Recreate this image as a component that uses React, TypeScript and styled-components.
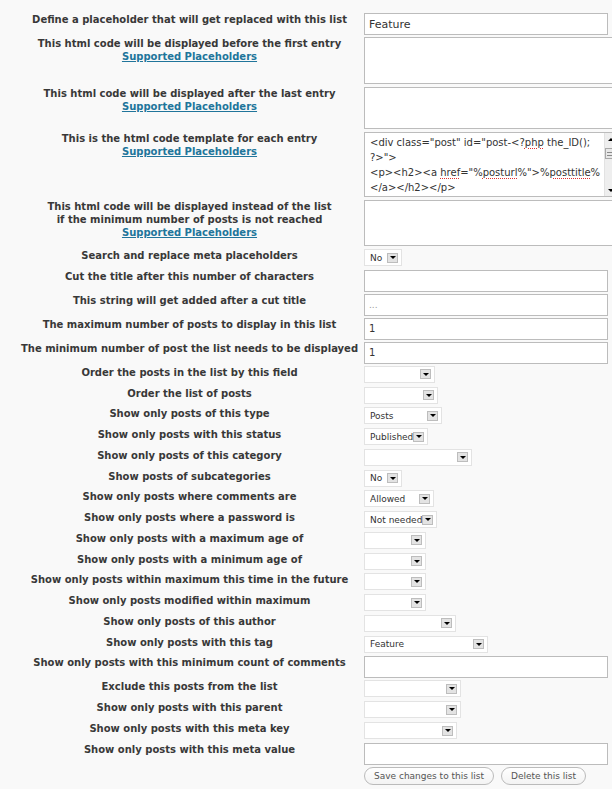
import React from 'react';
import styled, { createGlobalStyle } from 'styled-components';

const GlobalStyle = createGlobalStyle`
  html, body {
    margin: 0;
    padding: 0;
    background: #f9f9f9;
  }
  body {
    overflow: hidden;
    font-family: "DejaVu Sans", Verdana, sans-serif;
  }
`;

type Field =
  | { kind: 'input'; value?: string; size?: number; muted?: boolean }
  | { kind: 'textarea'; h: number }
  | { kind: 'code'; h: number }
  | { kind: 'select'; w: number; value?: string }
  | { kind: 'buttons' };

interface RowData {
  lines: string[];
  link?: boolean;
  field: Field;
}

const rows: RowData[] = [
  { lines: ['Define a placeholder that will get replaced with this list'], field: { kind: 'input', value: 'Feature', size: 11 } },
  { lines: ['This html code will be displayed before the first entry'], link: true, field: { kind: 'textarea', h: 47 } },
  { lines: ['This html code will be displayed after the last entry'], link: true, field: { kind: 'textarea', h: 42 } },
  { lines: ['This is the html code template for each entry'], link: true, field: { kind: 'code', h: 65 } },
  {
    lines: ['This html code will be displayed instead of the list', 'if the minimum number of posts is not reached'],
    link: true,
    field: { kind: 'textarea', h: 46 },
  },
  { lines: ['Search and replace meta placeholders'], field: { kind: 'select', w: 38, value: 'No' } },
  { lines: ['Cut the title after this number of characters'], field: { kind: 'input' } },
  { lines: ['This string will get added after a cut title'], field: { kind: 'input', value: '...', size: 9, muted: true } },
  { lines: ['The maximum number of posts to display in this list'], field: { kind: 'input', value: '1', size: 10 } },
  { lines: ['The minimum number of post the list needs to be displayed'], field: { kind: 'input', value: '1', size: 10 } },
  { lines: ['Order the posts in the list by this field'], field: { kind: 'select', w: 71 } },
  { lines: ['Order the list of posts'], field: { kind: 'select', w: 74 } },
  { lines: ['Show only posts of this type'], field: { kind: 'select', w: 78, value: 'Posts' } },
  { lines: ['Show only posts with this status'], field: { kind: 'select', w: 64, value: 'Published' } },
  { lines: ['Show only posts of this category'], field: { kind: 'select', w: 108 } },
  { lines: ['Show posts of subcategories'], field: { kind: 'select', w: 38, value: 'No' } },
  { lines: ['Show only posts where comments are'], field: { kind: 'select', w: 70, value: 'Allowed' } },
  { lines: ['Show only posts where a password is'], field: { kind: 'select', w: 73, value: 'Not needed' } },
  { lines: ['Show only posts with a maximum age of'], field: { kind: 'select', w: 62 } },
  { lines: ['Show only posts with a minimum age of'], field: { kind: 'select', w: 62 } },
  { lines: ['Show only posts within maximum this time in the future'], field: { kind: 'select', w: 62 } },
  { lines: ['Show only posts modified within maximum'], field: { kind: 'select', w: 62 } },
  { lines: ['Show only posts of this author'], field: { kind: 'select', w: 92 } },
  { lines: ['Show only posts with this tag'], field: { kind: 'select', w: 124, value: 'Feature' } },
  { lines: ['Show only posts with this minimum count of comments'], field: { kind: 'input' } },
  { lines: ['Exclude this posts from the list'], field: { kind: 'select', w: 97 } },
  { lines: ['Show only posts with this parent'], field: { kind: 'select', w: 97 } },
  { lines: ['Show only posts with this meta key'], field: { kind: 'select', w: 93 } },
  { lines: ['Show only posts with this meta value'], field: { kind: 'input' } },
  { lines: [], field: { kind: 'buttons' } },
];

const Page = styled.div`
  width: 612px;
  height: 789px;
  overflow: hidden;
  box-sizing: border-box;
  padding: 13px 0 0 16px;
`;

const Row = styled.div`
  display: flex;
  align-items: flex-start;
`;

const Label = styled.div`
  flex: none;
  width: 347px;
  margin-right: 1px;
  text-align: center;
  font-weight: bold;
  font-size: 10px;
  line-height: 13px;
  color: #383838;
  white-space: nowrap;
`;

const Link = styled.a`
  color: #21759b;
  text-decoration: underline;
  cursor: pointer;
`;

const Cell = styled.div`
  display: flex;
  flex-direction: column;
  align-items: flex-start;
  width: 260px;
`;

const TextInput = styled.input<{ $size: number; $muted?: boolean }>`
  display: block;
  width: 244px;
  height: 22px;
  box-sizing: border-box;
  margin: 0 0 2px;
  padding: 0 4px;
  border: 1px solid #bcbcbc;
  background: #fff;
  font-family: "DejaVu Sans", Verdana, sans-serif;
  font-size: ${(p) => p.$size}px;
  color: ${(p) => (p.$muted ? '#999' : '#333')};
  outline: none;
`;

const TextArea = styled.textarea<{ $h: number }>`
  display: block;
  width: 254px;
  height: ${(p) => p.$h}px;
  box-sizing: border-box;
  margin: 0 0 3px;
  border: 1px solid #bcbcbc;
  background: #fff;
  resize: none;
  outline: none;
`;

const CodeBox = styled.div<{ $h: number }>`
  display: flex;
  width: 254px;
  height: ${(p) => p.$h}px;
  box-sizing: border-box;
  margin: 0 0 3px;
  border: 1px solid #bcbcbc;
  background: #fff;
`;

const CodeText = styled.div`
  flex: 1;
  overflow: hidden;
  padding: 2px 0 0 5px;
  font-size: 10px;
  line-height: 15px;
  color: #333;
  white-space: pre;
`;

const Spell = styled.span`
  text-decoration: underline dotted #e03030;
  text-underline-offset: 2px;
`;

const ScrollBar = styled.div`
  flex: none;
  width: 12px;
  display: flex;
  flex-direction: column;
  background: #eeeeee;
  border-left: 1px solid #e2e2e2;
`;

const ScrollBtn = styled.div<{ $down?: boolean }>`
  height: 12px;
  display: flex;
  align-items: center;
  justify-content: center;
  &::after {
    content: '';
    border-left: 3px solid transparent;
    border-right: 3px solid transparent;
    ${(p) => (p.$down ? 'border-top: 3px solid #000;' : 'border-bottom: 3px solid #000;')}
  }
`;

const Track = styled.div`
  flex: 1;
  padding-top: 3px;
`;

const Thumb = styled.div`
  width: 10px;
  height: 11px;
  box-sizing: border-box;
  border: 1px solid #a8a8a8;
  background: repeating-linear-gradient(#e8e8e8 0 2px, #8a8a8a 2px 3px) center / 6px 7px no-repeat, #e8e8e8;
`;

const SelectBox = styled.div<{ $w: number }>`
  display: flex;
  align-items: center;
  width: ${(p) => p.$w}px;
  height: 17px;
  box-sizing: border-box;
  margin: 0 0 3.77px;
  padding-left: 5px;
  border: 1px solid #e3e3e3;
  background: #fff;
  font-size: 9px;
  color: #333;
`;

const SelectValue = styled.span`
  flex: 1;
  overflow: hidden;
  white-space: nowrap;
`;

const Arrow = styled.span`
  flex: none;
  width: 11px;
  height: 10px;
  box-sizing: border-box;
  margin-right: 3px;
  border: 1px solid #bdbdbd;
  background: #e3e3e3;
  display: flex;
  align-items: center;
  justify-content: center;
  &::after {
    content: '';
    border-left: 3px solid transparent;
    border-right: 3px solid transparent;
    border-top: 3px solid #000;
  }
`;

const Buttons = styled.div`
  display: flex;
  gap: 7px;
`;

const Button = styled.button`
  height: 18px;
  box-sizing: border-box;
  padding: 0 9px;
  border: 1px solid #bbbbbb;
  border-radius: 11px;
  background: linear-gradient(#ffffff, #f3f3f3);
  font-family: "DejaVu Sans", Verdana, sans-serif;
  font-size: 9px;
  color: #555;
  cursor: pointer;
`;

const CodeField: React.FC<{ h: number }> = ({ h }) => (
  <CodeBox $h={h}>
    <CodeText>
      {'<div class="post" id="post-<?'}
      <Spell>php</Spell>
      {' the_ID();\n?>">\n<p><h2><a '}
      <Spell>href</Spell>
      {'="%'}
      <Spell>posturl</Spell>
      {'%">%'}
      <Spell>posttitle</Spell>
      {'%\n</a></h2></p>'}
    </CodeText>
    <ScrollBar>
      <ScrollBtn />
      <Track>
        <Thumb />
      </Track>
      <ScrollBtn $down />
    </ScrollBar>
  </CodeBox>
);

const renderField = (f: Field) => {
  switch (f.kind) {
    case 'input':
      return <TextInput readOnly value={f.value ?? ''} $size={f.size ?? 11} $muted={f.muted} />;
    case 'textarea':
      return <TextArea readOnly $h={f.h} />;
    case 'code':
      return <CodeField h={f.h} />;
    case 'select':
      return (
        <SelectBox $w={f.w}>
          <SelectValue>{f.value ?? ''}</SelectValue>
          <Arrow />
        </SelectBox>
      );
    case 'buttons':
      return (
        <Buttons>
          <Button>Save changes to this list</Button>
          <Button>Delete this list</Button>
        </Buttons>
      );
  }
};

export default function App() {
  return (
    <>
      <GlobalStyle />
      <Page>
        {rows.map((r, i) => (
          <Row key={i}>
            <Label>
              {r.lines.map((l, j) => (
                <React.Fragment key={j}>
                  {l}
                  <br />
                </React.Fragment>
              ))}
              {r.link && <Link>Supported Placeholders</Link>}
            </Label>
            <Cell>{renderField(r.field)}</Cell>
          </Row>
        ))}
      </Page>
    </>
  );
}
